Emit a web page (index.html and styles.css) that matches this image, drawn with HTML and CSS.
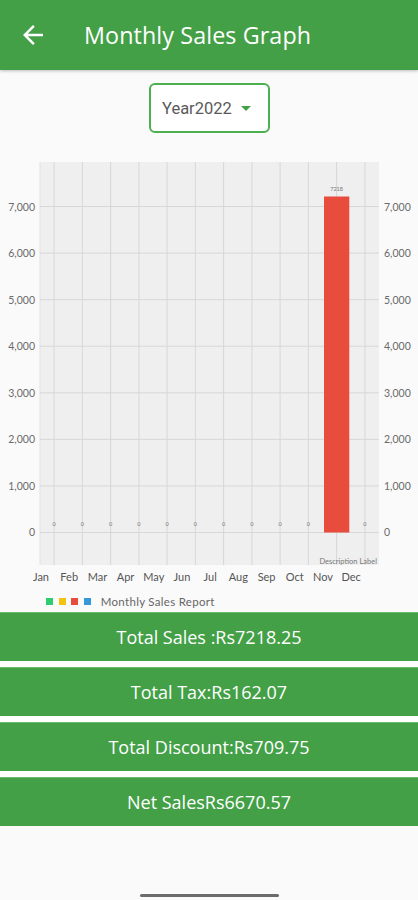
FILE: index.html
```html
<!DOCTYPE html>
<html lang="en">
<head>
<meta charset="utf-8">
<title>Monthly Sales Graph</title>
<link rel="stylesheet" href="styles.css">
</head>
<body>
<div class="app">
  <header class="appbar">
    <svg class="back" viewBox="0 0 24 24" width="30" height="30"><path d="M20 11H7.83l5.59-5.59L12 4l-8 8 8 8 1.41-1.41L7.83 13H20v-2z" fill="#fff"/></svg>
    <h1 class="title">Monthly Sales Graph</h1>
  </header>

  <div class="picker-row">
    <div class="picker">
      <span class="picker-text">Year2022</span>
      <span class="caret"></span>
    </div>
  </div>

  <svg class="chart" viewBox="0 155 418 432" width="418" height="432">
    <rect x="40" y="162" width="339" height="403" fill="#efefef"/>
    <line x1="40" y1="162" x2="40" y2="565" stroke="#e2e2e2" stroke-width="1"/>
    <g stroke="#d7d7d7" stroke-width="1">
      <line x1="40" x2="379" y1="532.5" y2="532.5"/>
      <line x1="40" x2="379" y1="485.9" y2="485.9"/>
      <line x1="40" x2="379" y1="439.4" y2="439.4"/>
      <line x1="40" x2="379" y1="392.8" y2="392.8"/>
      <line x1="40" x2="379" y1="346.2" y2="346.2"/>
      <line x1="40" x2="379" y1="299.7" y2="299.7"/>
      <line x1="40" x2="379" y1="253.1" y2="253.1"/>
      <line x1="40" x2="379" y1="206.5" y2="206.5"/>
      <line y1="162" y2="565" x1="54.1" x2="54.1"/>
      <line y1="162" y2="565" x1="82.4" x2="82.4"/>
      <line y1="162" y2="565" x1="110.6" x2="110.6"/>
      <line y1="162" y2="565" x1="138.9" x2="138.9"/>
      <line y1="162" y2="565" x1="167.1" x2="167.1"/>
      <line y1="162" y2="565" x1="195.4" x2="195.4"/>
      <line y1="162" y2="565" x1="223.6" x2="223.6"/>
      <line y1="162" y2="565" x1="251.9" x2="251.9"/>
      <line y1="162" y2="565" x1="280.1" x2="280.1"/>
      <line y1="162" y2="565" x1="308.4" x2="308.4"/>
      <line y1="162" y2="565" x1="336.6" x2="336.6"/>
      <line y1="162" y2="565" x1="364.9" x2="364.9"/>
    </g>
    <rect x="324" y="196.5" width="25.3" height="336" fill="#e84c3d"/>

    <g class="axis-l">
      <text x="35" y="536">0</text>
      <text x="35" y="489.5">1,000</text>
      <text x="35" y="443">2,000</text>
      <text x="35" y="396.5">3,000</text>
      <text x="35" y="350">4,000</text>
      <text x="35" y="303.5">5,000</text>
      <text x="35" y="257">6,000</text>
      <text x="35" y="210.5">7,000</text>
    </g>
    <g class="axis-r">
      <text x="384" y="536">0</text>
      <text x="384" y="489.5">1,000</text>
      <text x="384" y="443">2,000</text>
      <text x="384" y="396.5">3,000</text>
      <text x="384" y="350">4,000</text>
      <text x="384" y="303.5">5,000</text>
      <text x="384" y="257">6,000</text>
      <text x="384" y="210.5">7,000</text>
    </g>
    <g class="vals">
      <text x="54.1" y="526">0</text>
      <text x="82.4" y="526">0</text>
      <text x="110.6" y="526">0</text>
      <text x="138.9" y="526">0</text>
      <text x="167.1" y="526">0</text>
      <text x="195.4" y="526">0</text>
      <text x="223.6" y="526">0</text>
      <text x="251.9" y="526">0</text>
      <text x="280.1" y="526">0</text>
      <text x="308.4" y="526">0</text>
      <text x="364.9" y="526">0</text>
      <text x="336.6" y="191">7218</text>
    </g>
    <text class="desc" x="377" y="564">Description Label</text>
    <g class="axis-x">
      <text x="41" y="581">Jan</text>
      <text x="69.2" y="581">Feb</text>
      <text x="97.4" y="581">Mar</text>
      <text x="125.6" y="581">Apr</text>
      <text x="153.8" y="581">May</text>
      <text x="182" y="581">Jun</text>
      <text x="210.2" y="581">Jul</text>
      <text x="238.4" y="581">Aug</text>
      <text x="266.6" y="581">Sep</text>
      <text x="294.8" y="581">Oct</text>
      <text x="323" y="581">Nov</text>
      <text x="351.2" y="581">Dec</text>
    </g>
  </svg>

  <div class="legend">
    <span class="sw sw-green"></span>
    <span class="sw sw-yellow"></span>
    <span class="sw sw-red"></span>
    <span class="sw sw-blue"></span>
    <span class="legend-text">Monthly Sales Report</span>
  </div>

  <div class="totals">
    <div class="total">Total Sales :Rs7218.25</div>
    <div class="total">Total Tax:Rs162.07</div>
    <div class="total">Total Discount:Rs709.75</div>
    <div class="total">Net SalesRs6670.57</div>
  </div>

  <div class="spacer"></div>
  <div class="home-bar"></div>
</div>
</body>
</html>
```

FILE: styles.css
```css
* { box-sizing: border-box; }
html, body { margin: 0; padding: 0; }
body {
  background: #fafafa;
  font-family: "Open Sans", "Noto Sans", sans-serif;
  width: 418px;
  height: 900px;
  overflow: hidden;
}
.app {
  display: flex;
  flex-direction: column;
  height: 900px;
}
.appbar {
  height: 70px;
  background: #43a047;
  display: flex;
  align-items: center;
  padding-left: 18px;
  box-shadow: 0 1px 3px rgba(0,0,0,0.25);
  flex: none;
}
.back { display: block; margin-top: -1px; }
.title {
  margin: -1px 0 0 36px;
  color: #fff;
  font-family: "Open Sans", sans-serif;
  font-weight: 500;
  font-size: 23.3px;
  letter-spacing: 0.1px;
}
.picker-row {
  display: flex;
  justify-content: center;
  padding-top: 13px;
  padding-left: 1px;
  flex: none;
}
.picker {
  width: 121px;
  height: 50px;
  border: 2px solid #4caf50;
  border-radius: 6px;
  display: flex;
  align-items: center;
  padding-left: 11px;
  background: #fff;
}
.picker-text {
  font-family: "Roboto", sans-serif;
  font-size: 16.5px;
  color: #5a5a5a;
}
.caret {
  margin-left: 9px;
  width: 0;
  height: 0;
  border-left: 5px solid transparent;
  border-right: 5px solid transparent;
  border-top: 5px solid #43a047;
  margin-top: 1px;
}
.chart {
  display: block;
  margin-top: 22px;
  flex: none;
}
.chart text { font-family: "Lato", sans-serif; }
.axis-l text { font-size: 10.5px; fill: #6a6a6a; text-anchor: end; }
.axis-r text { font-size: 10.5px; fill: #6a6a6a; text-anchor: start; }
.axis-x text { font-size: 11px; fill: #555; text-anchor: middle; }
.vals text { font-size: 5.5px; fill: #777; text-anchor: middle; }
.desc { font-size: 7.5px; fill: #777; text-anchor: end; }
.legend {
  display: flex;
  align-items: center;
  height: 14px;
  margin-top: 7px;
  padding-left: 46px;
  flex: none;
}
.sw {
  width: 7px;
  height: 7px;
  margin-right: 5.7px;
}
.sw-green { background: #2ecc71; }
.sw-yellow { background: #f1c40f; }
.sw-red { background: #e74c3c; }
.sw-blue { background: #3498db; }
.legend-text {
  margin-left: 4px;
  font-family: "Lato", sans-serif;
  font-size: 11.5px;
  letter-spacing: 0.3px;
  color: #666;
}
.totals {
  margin-top: 4px;
  display: flex;
  flex-direction: column;
  gap: 6px;
  background: #fff;
  flex: none;
}
.total {
  height: 49px;
  background: #43a047;
  border-top: 1px solid #6bbb6f;
  color: #fff;
  font-family: "Open Sans", sans-serif;
  font-weight: 500;
  font-size: 18px;
  display: flex;
  align-items: center;
  justify-content: center;
}
.spacer { flex: 1; }
.home-bar {
  width: 139px;
  height: 3px;
  border-radius: 2px;
  background: #6b6b6b;
  margin: 0 auto 3px;
  flex: none;
}
```
